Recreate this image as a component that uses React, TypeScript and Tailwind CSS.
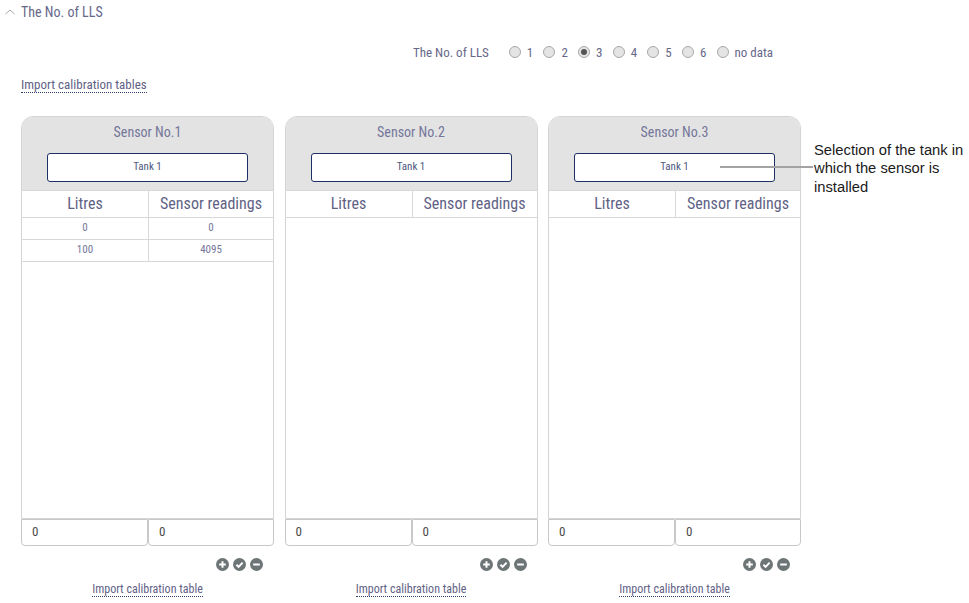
import { Fragment } from "react";

const ROWS = [
  ["0", "0"],
  ["100", "4095"],
];

const RADIOS = ["1", "2", "3", "4", "5", "6", "no data"];

function RoundIcon({ kind }: { kind: "plus" | "check" | "minus" }) {
  return (
    <svg width="13" height="13" viewBox="0 0 13 13">
      <circle cx="6.5" cy="6.5" r="6.5" fill="#6d7577" />
      {kind === "plus" && <path d="M6.5 3.2v6.6M3.2 6.5h6.6" stroke="#fff" strokeWidth="2" />}
      {kind === "check" && <path d="M3.4 6.8l2.2 2.1 4-4.3" stroke="#fff" strokeWidth="1.9" fill="none" />}
      {kind === "minus" && <path d="M3.2 6.5h6.6" stroke="#fff" strokeWidth="2" />}
    </svg>
  );
}

function SensorCard({ no, rows, callout }: { no: number; rows: string[][]; callout?: boolean }) {
  return (
    <div className="w-[253px] shrink-0">
      <div className="h-[403px] flex flex-col border border-[#d4d4d4] rounded-t-[12px]">
        <div className="h-[73px] shrink-0 bg-[#e3e3e3] rounded-t-[11px] flex flex-col items-center">
          <div className="h-[31px] flex items-center text-[14px] text-[#74769a]">Sensor No.{no}</div>
          <div className="relative mt-[5px] w-[201px] h-[29px] bg-white border border-[#1c2f66] rounded-[3px] flex items-center justify-center text-[11px] text-[#4f5a80]">
            Tank 1
            {/* callout line runs out of the card to the note on the right */}
            {callout && <div className="absolute left-[145px] top-[12px] w-[93px] h-[2px] bg-[#a3a3a3]" />}
          </div>
        </div>
        <div className="grid grid-cols-[127px_1fr] h-[28px] shrink-0 border-y border-[#d8d8d8] text-[16px] text-[#5f6285]">
          <div className="flex items-center justify-center border-r border-[#d8d8d8]">Litres</div>
          <div className="flex items-center justify-center">Sensor readings</div>
        </div>
        <div className="flex-1 bg-white">
          {rows.map((r, i) => (
            <div key={i} className="grid grid-cols-[127px_1fr] h-[22px] border-b border-[#d8d8d8] text-[11px] text-[#74769a]">
              <div className="flex items-center justify-center border-r border-[#d8d8d8]">{r[0]}</div>
              <div className="flex items-center justify-center">{r[1]}</div>
            </div>
          ))}
        </div>
      </div>
      <div className="flex h-[27px]">
        <div className="w-[127px] border border-[#c8c8c8] rounded-b-[4px] flex items-center pl-[10px] text-[13px] text-[#4a4a4a]">0</div>
        <div className="flex-1 border border-[#c8c8c8] rounded-b-[4px] flex items-center pl-[10px] text-[13px] text-[#4a4a4a]">0</div>
      </div>
      <div className="flex justify-end gap-[4px] pr-[11px] mt-[12px]">
        <RoundIcon kind="plus" />
        <RoundIcon kind="check" />
        <RoundIcon kind="minus" />
      </div>
      <div className="mt-[11px] flex justify-center text-[12px] text-[#5f6285]">
        <span className="border-b border-dotted border-[#2c3e70] leading-[14px]">Import calibration table</span>
      </div>
    </div>
  );
}

export default function App() {
  return (
    <div className="w-[969px] h-[603px] overflow-hidden bg-white relative font-['Roboto_Condensed','Roboto',sans-serif] [font-stretch:75%]">
      <div className="flex items-center h-[24px] pl-[5px] text-[14px] text-[#66688a]">
        <svg width="10" height="6" viewBox="0 0 10 6" className="mr-[6px]">
          <path d="M0.5 5L5 1l4.5 4" fill="none" stroke="#a8a8a8" strokeWidth="1" />
        </svg>
        The No. of LLS
      </div>

      <div className="flex items-center h-[16px] mt-[21px] pl-[413px] text-[13px] text-[#66688a]">
        <span className="mr-[20px]">The No. of LLS</span>
        {RADIOS.map((r) => (
          <Fragment key={r}>
            <span className="w-[12px] h-[12px] rounded-full bg-[#e4e4e4] border border-[#a9a9a9] flex items-center justify-center mr-[6px] -mt-[3px]">
              {r === "3" && <span className="w-[6px] h-[6px] rounded-full bg-[#555]" />}
            </span>
            <span className="mr-[10.2px]">{r}</span>
          </Fragment>
        ))}
      </div>

      <div className="mt-[14px] pl-[21px] text-[13px] text-[#5f6285]">
        <span className="border-b border-dotted border-[#2c3e70] leading-[14px] inline-block">Import calibration tables</span>
      </div>

      <div className="flex gap-[10.5px] pl-[21px] mt-[21px]">
        <SensorCard no={1} rows={ROWS} />
        <SensorCard no={2} rows={[]} />
        <SensorCard no={3} rows={[]} callout />
        <div className="ml-[2.5px] mt-[25px] w-[160px] font-['Liberation_Sans',sans-serif] [font-stretch:100%] text-[14.75px] leading-[18.5px] text-[#1a1a1a]">
          Selection of the tank in which the sensor is installed
        </div>
      </div>
    </div>
  );
}
